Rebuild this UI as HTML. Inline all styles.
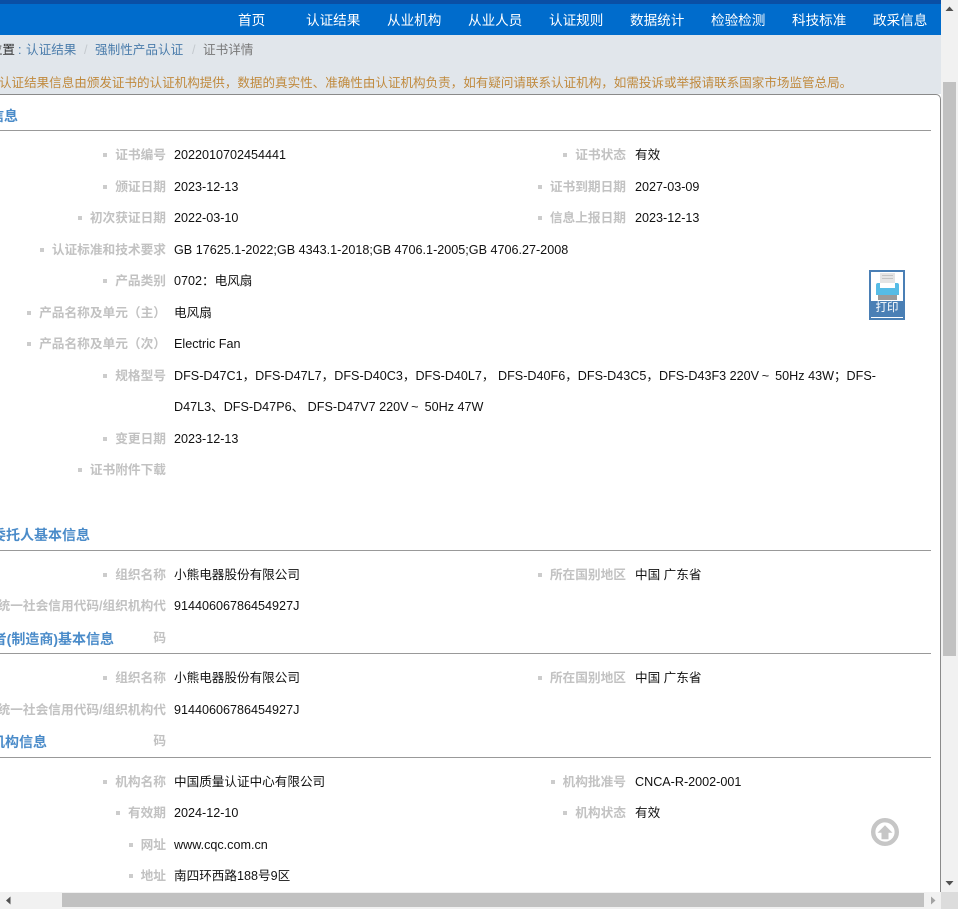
<!DOCTYPE html>
<html lang="zh-CN"><head><meta charset="utf-8"><title>证书详情</title>
<style>
html,body{margin:0;padding:0;width:958px;height:909px;overflow:hidden;background:#fff}
body{position:relative;font-family:"Liberation Sans","Noto Sans CJK SC",sans-serif;font-size:12.6px;color:#222}
div{position:absolute;white-space:nowrap}
.bar{background:#0a4fa5;left:0;top:0;width:941px;height:4px}
.nav{background:#006ccc;left:0;top:4px;width:941px;height:31px}
.n{top:4px;height:31px;line-height:33px;color:#fff;font-size:13.6px}
.bg{background:#e1e6eb;left:0;top:35px;width:941px;height:59px}
.panel{left:-20px;top:94px;width:959px;height:798px;background:#fff;border:1px solid #8a8a8a;border-bottom:0;border-radius:5px 5px 0 0}
.clip{left:0;top:0;width:941px;height:892px;overflow:hidden}
.l{right:775px;text-align:right;font-weight:bold;color:#c2c2c2;line-height:20px;height:20px;font-size:12.7px;margin-top:1px}
.r{right:315px;text-align:right;font-weight:bold;color:#c2c2c2;line-height:20px;height:20px;font-size:12.7px;margin-top:1px}
.l i,.r i{display:inline-block;width:4px;height:4px;background:#ccc;margin-right:8px;vertical-align:2px}
.v{left:174px;line-height:20px;height:20px;color:#111;margin-top:1px}
.w{left:635px;line-height:20px;height:20px;color:#111;margin-top:1px}
.t{font-weight:bold;font-size:14px;color:#4a8bc9;line-height:20px;height:20px;margin-top:1px}
.hr{left:0;width:931px;height:1px;background:#999}
.bc{top:40px;line-height:20px}
.tl{display:inline-block;width:12.6px;text-align:center}
</style></head><body>
<div class="clip">
<div class="bar"></div><div class="nav"></div>
<div class="n" style="left:238px">首页</div>
<div class="n" style="left:306px">认证结果</div>
<div class="n" style="left:387px">从业机构</div>
<div class="n" style="left:468px">从业人员</div>
<div class="n" style="left:549px">认证规则</div>
<div class="n" style="left:630px">数据统计</div>
<div class="n" style="left:711px">检验检测</div>
<div class="n" style="left:792px">科技标准</div>
<div class="n" style="left:873px">政采信息</div>
<div class="bg"></div>
<div class="bc" style="right:926px;color:#333">位置</div>
<div class="bc" style="left:18px;color:#4a7cab">:</div>
<div class="bc" style="left:26px;color:#4a7cab">认证结果</div>
<div class="bc" style="left:84px;color:#c4c9ce">/</div>
<div class="bc" style="left:95px;color:#4a7cab">强制性产品认证</div>
<div class="bc" style="left:192px;color:#c4c9ce">/</div>
<div class="bc" style="left:203px;color:#777">证书详情</div>
<div style="left:-1px;top:74px;line-height:18px;color:#c08a3e;font-size:12.55px">认证结果信息由颁发证书的认证机构提供，数据的真实性、准确性由认证机构负责，如有疑问请联系认证机构，如需投诉或举报请联系国家市场监管总局。</div>
<div class="panel"></div>

<div class="t" style="right:923px;top:105px">证书信息</div>
<div class="hr" style="top:130px"></div>

<div class="l" style="top:144px"><i></i>证书编号</div><div class="v" style="top:144px">2022010702454441</div>
<div class="r" style="top:144px"><i></i>证书状态</div><div class="w" style="top:144px">有效</div>
<div class="l" style="top:176px"><i></i>颁证日期</div><div class="v" style="top:176px">2023-12-13</div>
<div class="r" style="top:176px"><i></i>证书到期日期</div><div class="w" style="top:176px">2027-03-09</div>
<div class="l" style="top:207px"><i></i>初次获证日期</div><div class="v" style="top:207px">2022-03-10</div>
<div class="r" style="top:207px"><i></i>信息上报日期</div><div class="w" style="top:207px">2023-12-13</div>
<div class="l" style="top:239px"><i></i>认证标准和技术要求</div><div class="v" style="top:239px">GB 17625.1-2022;GB 4343.1-2018;GB 4706.1-2005;GB 4706.27-2008</div>
<div class="l" style="top:270px"><i></i>产品类别</div><div class="v" style="top:270px">0702：电风扇</div>
<div class="l" style="top:302px"><i></i>产品名称及单元（主）</div><div class="v" style="top:302px">电风扇</div>
<div class="l" style="top:333px"><i></i>产品名称及单元（次）</div><div class="v" style="top:333px">Electric Fan</div>
<div class="l" style="top:365px"><i></i>规格型号</div><div class="v" style="top:365px">DFS-D47C1，DFS-D47L7，DFS-D40C3，DFS-D40L7， DFS-D40F6，DFS-D43C5，DFS-D43F3 220V<span class="tl">~</span> 50Hz 43W；DFS-</div>
<div class="v" style="top:396px">D47L3、DFS-D47P6、 DFS-D47V7 220V<span class="tl">~</span> 50Hz 47W</div>
<div class="l" style="top:428px"><i></i>变更日期</div><div class="v" style="top:428px">2023-12-13</div>
<div class="l" style="top:459px"><i></i>证书附件下载</div>

<div class="t" style="right:851px;top:524px">委托人基本信息</div>
<div class="hr" style="top:550px"></div>
<div class="l" style="top:564px"><i></i>组织名称</div><div class="v" style="top:564px">小熊电器股份有限公司</div>
<div class="r" style="top:564px"><i></i>所在国别地区</div><div class="w" style="top:564px">中国 广东省</div>
<div class="l" style="top:595px">统一社会信用代码/组织机构代</div><div class="v" style="top:595px">91440606786454927J</div>
<div class="l" style="top:627px">码</div>

<div class="t" style="right:827px;top:628px">者(制造商)基本信息</div>
<div class="hr" style="top:653px"></div>
<div class="l" style="top:667px"><i></i>组织名称</div><div class="v" style="top:667px">小熊电器股份有限公司</div>
<div class="r" style="top:667px"><i></i>所在国别地区</div><div class="w" style="top:667px">中国 广东省</div>
<div class="l" style="top:699px">统一社会信用代码/组织机构代</div><div class="v" style="top:699px">91440606786454927J</div>
<div class="l" style="top:730px">码</div>

<div class="t" style="right:894px;top:731px">认证机构信息</div>
<div class="hr" style="top:757px"></div>
<div class="l" style="top:771px"><i></i>机构名称</div><div class="v" style="top:771px">中国质量认证中心有限公司</div>
<div class="r" style="top:771px"><i></i>机构批准号</div><div class="w" style="top:771px">CNCA-R-2002-001</div>
<div class="l" style="top:802px"><i></i>有效期</div><div class="v" style="top:802px">2024-12-10</div>
<div class="r" style="top:802px"><i></i>机构状态</div><div class="w" style="top:802px">有效</div>
<div class="l" style="top:834px"><i></i>网址</div><div class="v" style="top:834px">www.cqc.com.cn</div>
<div class="l" style="top:865px"><i></i>地址</div><div class="v" style="top:865px">南四环西路188号9区</div>

<div style="left:869px;top:270px;width:36px;height:50px;background:#4a7fb5"></div>
<div style="left:871px;top:272px;width:32px;height:29px;background:#fff"></div>
<svg style="position:absolute;left:869px;top:270px" width="36" height="32" viewBox="0 0 36 32">
<rect x="11" y="3" width="15" height="10" fill="#e4e4e4"/><rect x="13" y="5" width="11" height="1" fill="#c4c4c4"/><rect x="13" y="8" width="11" height="1" fill="#c4c4c4"/>
<path d="M7 25V15Q7 13 9 13H11V18H26V13H28Q30 13 30 15V25Z" fill="#56bce6"/>
<rect x="11" y="13" width="15" height="5" fill="#fff"/>
<rect x="9" y="25" width="19" height="5" fill="#9b9b9b"/></svg>
<div style="left:869px;top:301px;width:36px;text-align:center;color:#fff;font-size:11.5px;line-height:14px">打印</div>
<div style="left:871px;top:317px;width:32px;height:1px;background:#fff"></div>

<svg style="position:absolute;left:870px;top:816.500px" width="30" height="30" viewBox="0 0 30 30">
<circle cx="15" cy="15" r="11.8" fill="none" stroke="#c6c6c6" stroke-width="4.400"/>
<path d="M15 8.300L22.500 15.700H18.500V22.300H11.500V15.700H7.500Z" fill="#c6c6c6"/></svg>
</div>

<div style="left:941px;top:0;width:17px;height:892px;background:#f1f1f1"></div>
<div style="left:943px;top:82px;width:13px;height:574px;background:#c1c1c1"></div>
<svg style="position:absolute;left:941px;top:0" width="17" height="892"><path d="M4.500 11L8.500 6.500L12.500 11Z" fill="#505050"/><path d="M4.500 881L12.500 881L8.500 885.500Z" fill="#505050"/></svg>
<div style="left:0;top:892px;width:941px;height:17px;background:#f1f1f1"></div>
<div style="left:62px;top:893px;width:862px;height:14px;background:#c1c1c1"></div>
<svg style="position:absolute;left:0;top:892px" width="941" height="17"><path d="M10.500 4.500L10.500 12.500L6 8.500Z" fill="#505050"/><path d="M931 4.500L931 12.500L935.500 8.500Z" fill="#a3a3a3"/></svg>
<div style="left:941px;top:892px;width:17px;height:17px;background:#dcdcdc"></div>
</body></html>
